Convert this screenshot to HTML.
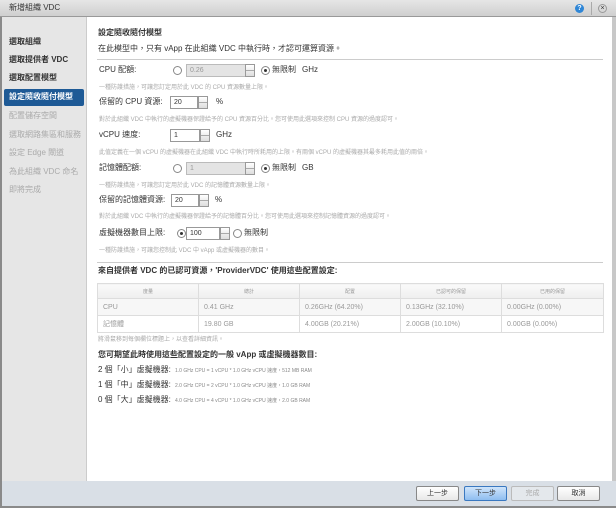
<!DOCTYPE html><html><head><meta charset="utf-8"><style>
*{margin:0;padding:0;box-sizing:border-box}
body{width:616px;height:508px;overflow:hidden;background:#fff;font-family:"Liberation Sans","Noto Sans CJK TC",sans-serif;font-size:8px;color:#333;position:relative}
.a{position:absolute;white-space:nowrap;line-height:10px}
#tb{position:absolute;left:0;top:0;width:616px;height:17px;background:linear-gradient(#e6e6e6,#cfcfcf);border-bottom:1px solid #999}
#side{position:absolute;left:0;top:17px;width:87px;height:464px;background:#e6e6e6;border-left:2px solid #8a8a8a;border-right:1px solid #ccc}
#bot{position:absolute;left:0;top:481px;width:616px;height:27px;background:#d9dfe6;border-left:2px solid #8a8a8a;border-bottom:2px solid #8a8a8a}
#rb{position:absolute;left:612px;top:17px;width:4px;height:491px;background:#c8c8c8}
.s{left:9px;font-weight:bold;color:#333}
.g{color:#aaa;font-weight:normal}
.d{color:#aaa;font-size:6px}
.hr{position:absolute;left:97px;width:506px;height:1px;background:#ccc}
.in{position:absolute;height:13px;border:1px solid #999;background:#fff;font-size:7px;padding:2px 3px;line-height:8px}
.in.dis{background:#e4e4e4;color:#999;border-color:#bbb}
.sp{position:absolute;width:10px;height:13px;border:1px solid #999;background:linear-gradient(#fff,#ddd)}
.sp:after{content:"";position:absolute;left:0;top:5px;width:8px;height:1px;background:#aaa}
.r{position:absolute;width:9px;height:9px;border:1px solid #888;border-radius:50%;background:#fff}
.r.on:after{content:"";position:absolute;left:2px;top:2px;width:3px;height:3px;border-radius:50%;background:#333}
table{position:absolute;left:97px;top:283px;width:506px;border-collapse:collapse;font-size:7px;color:#999;table-layout:fixed}
td,th{border:1px solid #ddd;padding:0 5px;height:17px;text-align:left;font-weight:normal;width:101px;white-space:nowrap}
th{height:15px;text-align:center;font-size:5px;background:linear-gradient(#fafafa,#eee)}
.btn{position:absolute;top:486px;width:43px;height:15px;border:1px solid #888;border-radius:2px;background:linear-gradient(#fff,#e8e8e8);text-align:center;font-size:7px;line-height:13px;color:#333}
</style></head><body>
<div id="tb"></div>
<div class="a" style="left:9px;top:3px;color:#333">新增組織 VDC</div>
<div style="position:absolute;left:575px;top:4px;width:9px;height:9px;border-radius:50%;background:#2f86d6;color:#fff;font-size:7px;line-height:9px;text-align:center;font-weight:bold">?</div>
<div style="position:absolute;left:591px;top:2px;width:1px;height:13px;background:#aaa"></div>
<div style="position:absolute;left:598px;top:4px;width:9px;height:9px;border-radius:50%;border:1px solid #999;font-size:7px;line-height:7px;text-align:center">×</div>
<div id="side"></div>
<div id="rb"></div>
<div class="a s" style="top:37px">選取組織</div>
<div class="a s" style="top:55px">選取提供者 VDC</div>
<div class="a s" style="top:73px">選取配置模型</div>
<div style="position:absolute;left:4px;top:89px;width:80px;height:17px;background:#1e5a96;border-radius:2px"></div>
<div class="a s" style="top:92px;color:#fff">設定隨收隨付模型</div>
<div class="a s g" style="top:111px">配置儲存空間</div>
<div class="a s g" style="top:130px">選取網路集區和服務</div>
<div class="a s g" style="top:148px">設定 Edge 閘道</div>
<div class="a s g" style="top:167px">為此組織 VDC 命名</div>
<div class="a s g" style="top:185px">即將完成</div>

<div class="a" style="left:98px;top:28px;font-weight:bold">設定隨收隨付模型</div>
<div class="a" style="left:98px;top:44px">在此模型中，只有 vApp 在此組織 VDC 中執行時，才認可運算資源。</div>
<div class="hr" style="top:59px"></div>

<div class="a" style="left:99px;top:65px">CPU 配額:</div>
<div class="r" style="left:173px;top:66px"></div>
<div class="in dis" style="left:186px;top:64px;width:60px">0.26</div>
<div class="sp" style="left:245px;top:64px"></div>
<div class="r on" style="left:261px;top:66px"></div>
<div class="a" style="left:272px;top:65px">無限制</div>
<div class="a" style="left:302px;top:65px">GHz</div>
<div class="a d" style="left:99px;top:83px">一種防護措施，可讓您訂定用於此 VDC 的 CPU 資源數量上限。</div>

<div class="a" style="left:99px;top:97px">保留的 CPU 資源:</div>
<div class="in" style="left:170px;top:96px;width:28px">20</div>
<div class="sp" style="left:198px;top:96px"></div>
<div class="a" style="left:216px;top:97px">%</div>
<div class="a d" style="left:99px;top:115px">對於此組織 VDC 中執行的虛擬機器保證給予的 CPU 資源百分比。您可使用此選項來控制 CPU 資源的過度認可。</div>

<div class="a" style="left:99px;top:130px">vCPU 速度:</div>
<div class="in" style="left:170px;top:129px;width:30px">1</div>
<div class="sp" style="left:200px;top:129px"></div>
<div class="a" style="left:216px;top:130px">GHz</div>
<div class="a d" style="left:99px;top:148px">此值定義在一個 vCPU 的虛擬機器在此組織 VDC 中執行時所耗用的上限。有兩個 vCPU 的虛擬機器其最多耗用此值的兩倍。</div>

<div class="a" style="left:99px;top:163px">記憶體配額:</div>
<div class="r" style="left:173px;top:164px"></div>
<div class="in dis" style="left:186px;top:162px;width:60px">1</div>
<div class="sp" style="left:245px;top:162px"></div>
<div class="r on" style="left:261px;top:164px"></div>
<div class="a" style="left:272px;top:163px">無限制</div>
<div class="a" style="left:302px;top:163px">GB</div>
<div class="a d" style="left:99px;top:181px">一種防護措施，可讓您訂定用於此 VDC 的記憶體資源數量上限。</div>

<div class="a" style="left:99px;top:195px">保留的記憶體資源:</div>
<div class="in" style="left:171px;top:194px;width:28px">20</div>
<div class="sp" style="left:199px;top:194px"></div>
<div class="a" style="left:215px;top:195px">%</div>
<div class="a d" style="left:99px;top:212px">對於此組織 VDC 中執行的虛擬機器保證給予的記憶體百分比。您可使用此選項來控制記憶體資源的過度認可。</div>

<div class="a" style="left:99px;top:228px">虛擬機器數目上限:</div>
<div class="r on" style="left:177px;top:229px"></div>
<div class="in" style="left:186px;top:227px;width:34px">100</div>
<div class="sp" style="left:220px;top:227px"></div>
<div class="r" style="left:233px;top:229px"></div>
<div class="a" style="left:244px;top:228px">無限制</div>
<div class="a d" style="left:99px;top:246px">一種防護措施，可讓您控制此 VDC 中 vApp 或虛擬機器的數目。</div>
<div class="hr" style="top:262px"></div>
<div class="a" style="left:98px;top:266px;font-weight:bold">來自提供者 VDC 的已認可資源，'ProviderVDC' 使用這些配置設定:</div>
<table>
<colgroup><col style="width:101px"><col style="width:101px"><col style="width:101px"><col style="width:101px"><col style="width:102px"></colgroup>
<tr><th>度量</th><th>總計</th><th>配置</th><th>已認可的保留</th><th>已用的保留</th></tr>
<tr style="background:#f7f7f7"><td>CPU</td><td>0.41 GHz</td><td>0.26GHz (64.20%)</td><td>0.13GHz (32.10%)</td><td>0.00GHz (0.00%)</td></tr>
<tr><td>記憶體</td><td>19.80 GB</td><td>4.00GB (20.21%)</td><td>2.00GB (10.10%)</td><td>0.00GB (0.00%)</td></tr>
</table>
<div class="a d" style="left:98px;top:335px">將滑鼠移到每個欄位標題上，以查看詳細資訊。</div>
<div class="a" style="left:98px;top:350px;font-weight:bold">您可期望此時使用這些配置設定的一般 vApp 或虛擬機器數目:</div>
<div class="a" style="left:98px;top:365px">2 個「小」虛擬機器:</div><div class="a" style="left:175px;top:366px;font-size:5px;color:#888">1.0 GHz CPU = 1 vCPU * 1.0 GHz vCPU 速度，512 MB RAM</div>
<div class="a" style="left:98px;top:380px">1 個「中」虛擬機器:</div><div class="a" style="left:175px;top:381px;font-size:5px;color:#888">2.0 GHz CPU = 2 vCPU * 1.0 GHz vCPU 速度，1.0 GB RAM</div>
<div class="a" style="left:98px;top:395px">0 個「大」虛擬機器:</div><div class="a" style="left:175px;top:396px;font-size:5px;color:#888">4.0 GHz CPU = 4 vCPU * 1.0 GHz vCPU 速度，2.0 GB RAM</div>

<div id="bot"></div>
<div class="btn" style="left:416px">上一步</div>
<div class="btn" style="left:464px;background:linear-gradient(#cfe4fb,#8fbdf0);border-color:#3a78c0">下一步</div>
<div class="btn" style="left:511px;color:#aaa;border-color:#bbb;background:#e4e8ec">完成</div>
<div class="btn" style="left:557px">取消</div>
</body></html>
